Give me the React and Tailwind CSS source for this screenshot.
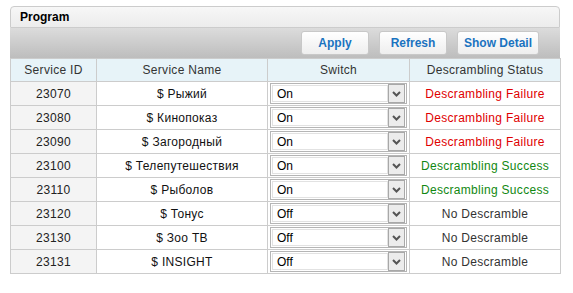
const rows = [
  { id: '23070', name: '$ Рыжий', sw: 'On', status: 'Descrambling Failure', tone: 'fail' },
  { id: '23080', name: '$ Кинопоказ', sw: 'On', status: 'Descrambling Failure', tone: 'fail' },
  { id: '23090', name: '$ Загородный', sw: 'On', status: 'Descrambling Failure', tone: 'fail' },
  { id: '23100', name: '$ Телепутешествия', sw: 'On', status: 'Descrambling Success', tone: 'ok' },
  { id: '23110', name: '$ Рыболов', sw: 'On', status: 'Descrambling Success', tone: 'ok' },
  { id: '23120', name: '$ Тонус', sw: 'Off', status: 'No Descramble', tone: 'none' },
  { id: '23130', name: '$ Зоо ТВ', sw: 'Off', status: 'No Descramble', tone: 'none' },
  { id: '23131', name: '$ INSIGHT', sw: 'Off', status: 'No Descramble', tone: 'none' },
]

const toneClass = {
  fail: 'text-[#e00000]',
  ok: 'text-[#118811]',
  none: 'text-[#333333]',
}

function ToolButton({ children, width }) {
  return (
    <button className={`${width} h-[24px] rounded-[3px] border border-[#c8c8c8] bg-gradient-to-b from-[#ffffff] to-[#eeeeee] text-[12px] font-bold text-[#1a73c0]`}>
      {children}
    </button>
  )
}

function SwitchSelect({ value }) {
  return (
    <div className="mx-[2px] flex h-[21px] items-center border border-[#b5b5b5] bg-white p-[1px]">
      <div className="flex h-full flex-1 items-center border border-[#e2e2e2] pl-[4px] text-[12px] tracking-normal text-black">{value}</div>
      <div className="flex h-[19px] w-[17px] items-center justify-center border border-[#a8a8a8] bg-[#ececec]">
        <svg width="9" height="6" viewBox="0 0 9 6">
          <path d="M1 1 L4.5 4.5 L8 1" fill="none" stroke="#555" strokeWidth="2" />
        </svg>
      </div>
    </div>
  )
}

export default function App() {
  return (
    <div className="h-[293px] w-[573px] bg-white pt-[6px] pl-[10px] font-['Liberation_Sans',Arial,sans-serif]">
      <div className="w-[550px]">
        {/* Title bar */}
        <div className="flex h-[22px] items-center rounded-t-[4px] border border-[#cccccc] bg-gradient-to-b from-[#f7f7f7] to-[#ececec] pl-[9px] text-[12px] font-bold text-black">
          Program
        </div>

        {/* Toolbar */}
        <div className="flex h-[30px] items-center justify-end gap-[10px] bg-gradient-to-b from-[#dcdcdc] to-[#bdbdbd] pr-[21px]">
          <ToolButton width="w-[68px]">Apply</ToolButton>
          <ToolButton width="w-[68px]">Refresh</ToolButton>
          <ToolButton width="w-[82px]">Show Detail</ToolButton>
        </div>

        {/* Table */}
        <table className="w-[550px] table-fixed border-collapse text-[12px] tracking-[0.3px]">
          <colgroup>
            <col className="w-[86px]" />
            <col className="w-[171px]" />
            <col className="w-[142px]" />
            <col className="w-[151px]" />
          </colgroup>
          <thead>
            <tr className="h-[23px] bg-[#e7f3f8] text-[#333333]">
              <th className="border border-[#cccccc] font-normal">Service ID</th>
              <th className="border border-[#cccccc] font-normal">Service Name</th>
              <th className="border border-[#cccccc] font-normal">Switch</th>
              <th className="border border-[#cccccc] font-normal">Descrambling Status</th>
            </tr>
          </thead>
          <tbody>
            {rows.map((r) => (
              <tr key={r.id} className="h-[24px]">
                <td className="border border-[#cccccc] bg-[#f4f4f4] text-center text-[#222222]">{r.id}</td>
                <td className="border border-[#cccccc] text-center text-[#111111]">{r.name}</td>
                <td className="border border-[#cccccc] p-0">
                  <SwitchSelect value={r.sw} />
                </td>
                <td className={`border border-[#cccccc] text-center ${toneClass[r.tone]}`}>{r.status}</td>
              </tr>
            ))}
          </tbody>
        </table>
      </div>
    </div>
  )
}
